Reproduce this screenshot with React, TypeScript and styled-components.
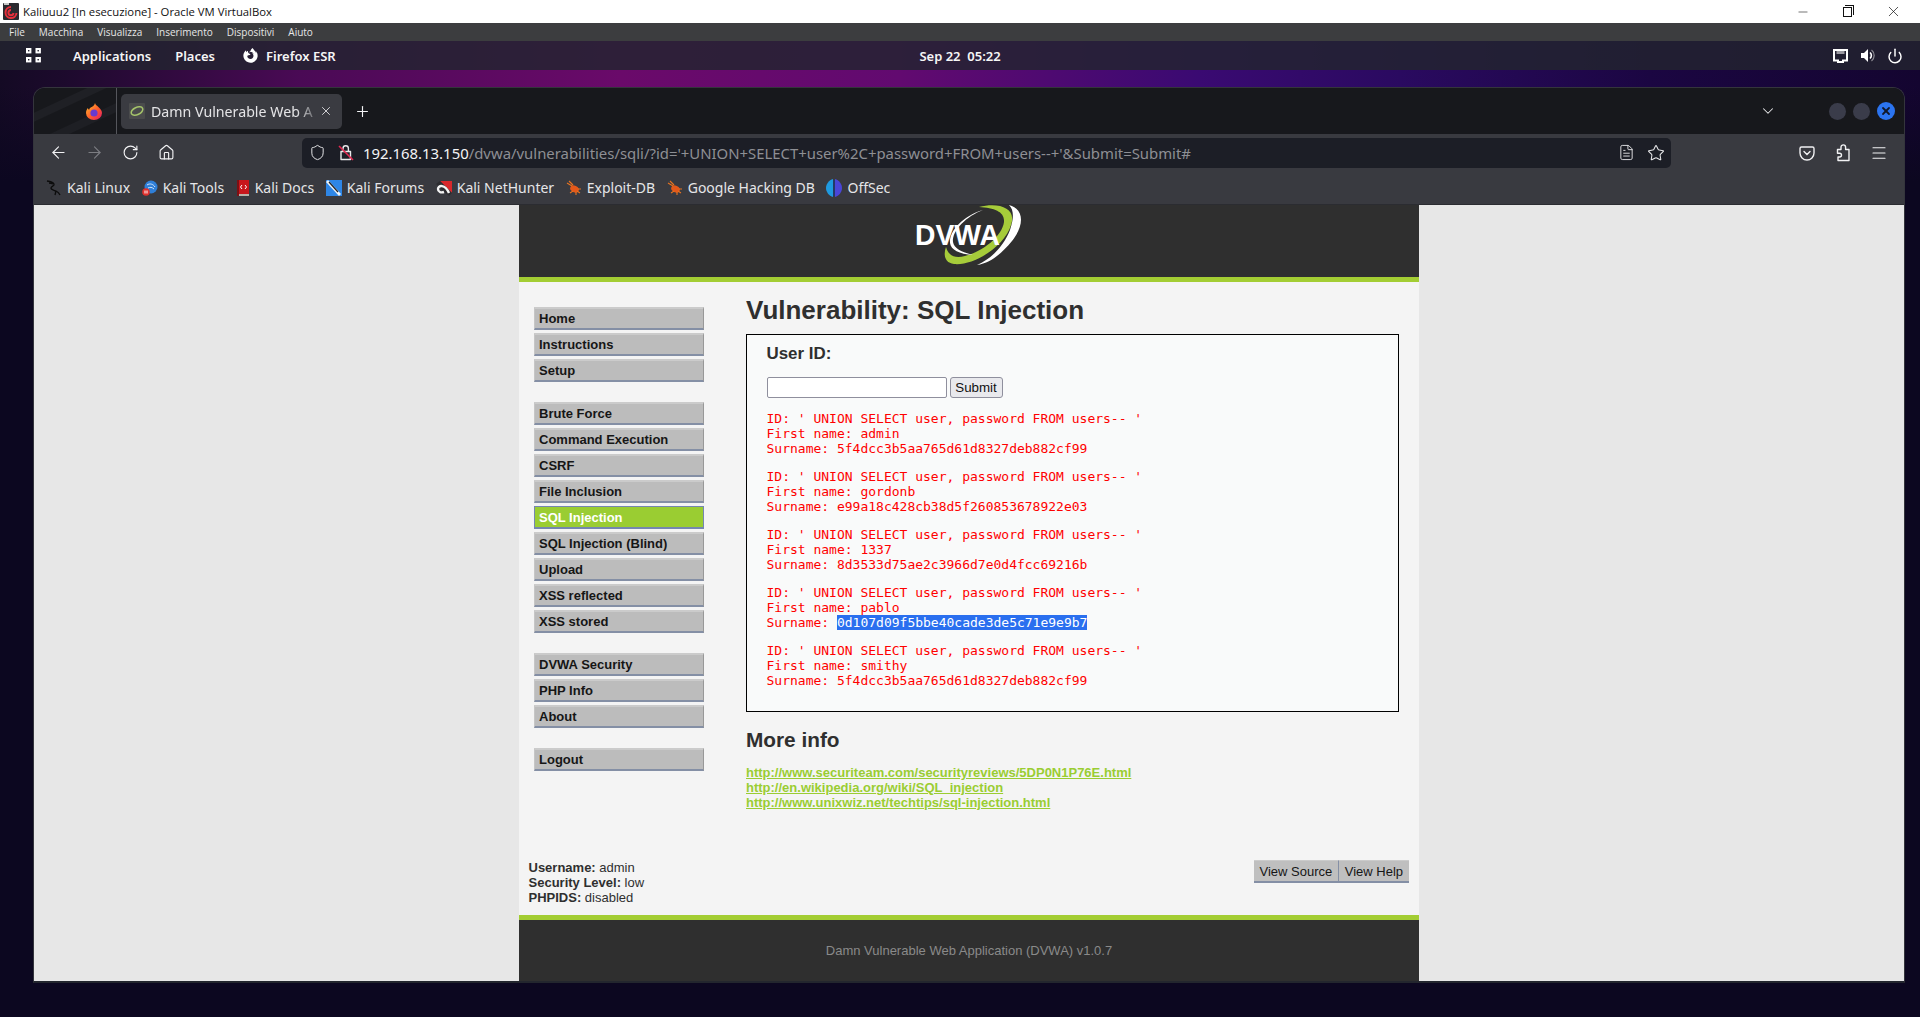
import React from 'react'
import styled, { createGlobalStyle } from 'styled-components'
import { ArrowLeft, ArrowRight, RotateCw, House, Shield, Star, X, Plus, ChevronDown, Menu as MenuIcon, Power, FileText, Minus } from 'lucide-react'
import { FaFirefoxBrowser } from 'react-icons/fa'

const GlobalStyle = createGlobalStyle`
  html, body { margin: 0; padding: 0; height: 100%; overflow: hidden; background: #0c0720; }
  #root { height: 100%; }
  * { box-sizing: border-box; }
`

const vmMenu = ['File', 'Macchina', 'Visualizza', 'Inserimento', 'Dispositivi', 'Aiuto']

const menuGroups = [
  ['Home', 'Instructions', 'Setup'],
  ['Brute Force', 'Command Execution', 'CSRF', 'File Inclusion', 'SQL Injection', 'SQL Injection (Blind)', 'Upload', 'XSS reflected', 'XSS stored'],
  ['DVWA Security', 'PHP Info', 'About'],
  ['Logout'],
]

const results = [
  { name: 'admin', hash: '5f4dcc3b5aa765d61d8327deb882cf99' },
  { name: 'gordonb', hash: 'e99a18c428cb38d5f260853678922e03' },
  { name: '1337', hash: '8d3533d75ae2c3966d7e0d4fcc69216b' },
  { name: 'pablo', hash: '0d107d09f5bbe40cade3de5c71e9e9b7', selected: true },
  { name: 'smithy', hash: '5f4dcc3b5aa765d61d8327deb882cf99' },
]

const links = [
  'http://www.securiteam.com/securityreviews/5DP0N1P76E.html',
  'http://en.wikipedia.org/wiki/SQL_injection',
  'http://www.unixwiz.net/techtips/sql-injection.html',
]

const VBoxIcon = () => (
  <svg width="16" height="17" viewBox="0 0 16 17">
    <rect width="16" height="17" rx="1" fill="#2b2b30" />
    <rect x="1" y="0" width="5" height="2" fill="#c9c9c9" />
    <path d="M8 4a5.5 5.5 0 1 0 5.5 6M8 7a2.6 2.6 0 1 0 2.6 3" fill="none" stroke="#e8303c" strokeWidth="2" />
  </svg>
)

const GridIcon = () => (
  <svg width="16" height="15" viewBox="0 0 16 15" fill="none" stroke="#fff" strokeWidth="2">
    <rect x="1" y="1" width="3.4" height="3.4" />
    <rect x="10.5" y="1" width="3.4" height="3.4" />
    <rect x="1" y="10" width="3.4" height="3.4" />
    <rect x="10.5" y="10" width="3.4" height="3.4" />
  </svg>
)

const NetworkIcon = () => (
  <svg width="15" height="15" viewBox="0 0 15 15">
    <path d="M1 2h13v10.5h-4V14H5v-1.5H1z" fill="none" stroke="#fff" strokeWidth="2" />
    <path d="M3.5 3h8v3h-8z" fill="#fff" opacity=".55" />
  </svg>
)

const SpeakerIcon = () => (
  <svg width="15" height="15" viewBox="0 0 15 15">
    <path d="M1 5h3l4-4v13l-4-4H1z" fill="#fff" />
    <path d="M10 4.5a4 4 0 0 1 0 6" fill="none" stroke="#fff" strokeWidth="1.6" />
    <path d="M11.5 2a7 7 0 0 1 0 11" fill="none" stroke="#8a8a92" strokeWidth="1.2" />
  </svg>
)

const FirefoxIcon = () => (
  <svg width="16" height="17" viewBox="0 0 16 17">
    <defs>
      <linearGradient id="ffx" x1="0" y1="0" x2="1" y2="1">
        <stop offset="0" stopColor="#ffc32c" />
        <stop offset=".55" stopColor="#ff5a2c" />
        <stop offset="1" stopColor="#e3186c" />
      </linearGradient>
    </defs>
    <path d="M9 0c.3 2 2 2.500 3.600 4.200C15 6.500 16 8 16 10a8 7 0 0 1-16 0c0-2.500 1-4 2-5 0 1 .5 1.600 1.200 1.800C3.500 4.500 6.500 4 7.500 2.800 8.300 2 8.800 1 9 0z" fill="url(#ffx)" />
    <circle cx="8" cy="10" r="3.600" fill="#6a3ad0" />
  </svg>
)

const DvwaFavicon = () => (
  <svg width="16" height="16" viewBox="0 0 16 16">
    <rect width="16" height="16" rx="1" fill="#4a4b4c" />
    <ellipse cx="8" cy="8" rx="6.200" ry="3.600" transform="rotate(-25 8 8)" fill="none" stroke="#a5c46a" strokeWidth="1.500" />
  </svg>
)

const LockOffIcon = () => (
  <svg width="16" height="17" viewBox="0 0 16 17" fill="none" strokeWidth="1.400">
    <path d="M3 7.500h9.500V15.500H3z" stroke="#e8e8ea" strokeLinejoin="round" />
    <path d="M5 7.500V4.500a2.700 2.700 0 0 1 5.400 0v3" stroke="#e8e8ea" />
    <path d="M1 2l14 14" stroke="#e22850" strokeWidth="1.600" />
  </svg>
)

const PocketIcon = () => (
  <svg width="16" height="16" viewBox="0 0 16 16" fill="none" stroke="#f0f0f2" strokeWidth="1.400">
    <path d="M2.500 2h11A1.500 1.500 0 0 1 15 3.500V8A7 7 0 0 1 1 8V3.500A1.500 1.500 0 0 1 2.500 2z" />
    <path d="M5 6.500l3 3 3-3" strokeLinecap="round" />
  </svg>
)

const ExtensionIcon = () => (
  <svg width="16" height="18" viewBox="0 0 16 18" fill="none" stroke="#f2f2f4" strokeWidth="1.400" strokeLinejoin="round">
    <path d="M2.500 5.500h3.500V3.200a2.300 2.300 0 0 1 4.600 0v2.300h3.400v11H3v-3.500h1.600a1.900 1.900 0 0 0 0-3.800H2.500z" />
  </svg>
)

const KaliIcon = () => (
  <svg width="16" height="16" viewBox="0 0 16 16" fill="none" stroke="#0c0c0c" strokeWidth="1.300">
    <path d="M1 1c3 .5 6 1 7 3 1 2-3 2-3 4s3 2 5 3 3 2 4 4" />
    <path d="M3 3c2 0 3 .5 4 1M10 11l-1 4" />
  </svg>
)

const KaliToolsIcon = () => (
  <svg width="16" height="16" viewBox="0 0 16 16">
    <circle cx="9" cy="7" r="6.500" fill="#2f7fd8" />
    <path d="M5 5c3-2 6-1 8 2M6 8c2-1 4-1 6 1" fill="none" stroke="#cfe4fa" strokeWidth="1" />
    <circle cx="4" cy="12" r="3.800" fill="#e0302c" />
    <path d="M3 10.500v3M5 10.500v3" stroke="#fff" strokeWidth="1" />
  </svg>
)

const KaliDocsIcon = () => (
  <svg width="14" height="16" viewBox="0 0 14 16">
    <rect x="1" y="0" width="12" height="14" fill="#c8161c" />
    <rect x="1" y="14" width="12" height="2" fill="#b8b0a8" />
    <rect x="1" y="0" width="2" height="16" fill="#7c1014" />
    <path d="M6 5L4.500 7 6 9M9 5l1.500 2L9 9" fill="none" stroke="#fff" strokeWidth="1" />
  </svg>
)

const KaliForumsIcon = () => (
  <svg width="16" height="16" viewBox="0 0 16 16">
    <rect width="16" height="16" fill="#2e86e6" />
    <path d="M2 0l13 14-2 2L0 2z" fill="#eef3f8" />
    <path d="M3 2l9 10" stroke="#222" strokeWidth="1.200" />
  </svg>
)

const NetHunterIcon = () => (
  <svg width="16" height="16" viewBox="0 0 16 16">
    <path d="M4 1h12v12z" fill="#d8282c" />
    <path d="M0 4l4-3 12 12-3 3z" fill="#2c2c30" />
    <path d="M13 13C9 4 2 5 2 9c0 3 3 4 6 3" fill="none" stroke="#f4f4f4" strokeWidth="2.400" />
  </svg>
)

const BugIcon = () => (
  <svg width="16" height="16" viewBox="0 0 16 16">
    <ellipse cx="8.500" cy="9" rx="4.500" ry="3.200" transform="rotate(25 8.500 9)" fill="#e4581a" />
    <path d="M1 3l5 3M3 1l4 4M4 13l3-2M10 15l0-3M15 9h-3M14 13l-3-2" stroke="#e8731f" strokeWidth="1.100" />
  </svg>
)

const OffSecIcon = () => (
  <svg width="16" height="18" viewBox="0 0 16 18">
    <path d="M7 0C3 1 0 5 0 9s3 8 7 9z" fill="#1f9ae0" />
    <path d="M9 0c4 1 7 5 7 9s-3 8-7 9z" fill="#4a46d8" />
    <path d="M8 1v16" stroke="#0c3a90" strokeWidth="1" />
  </svg>
)

const bookmarks = [
  { label: 'Kali Linux', icon: <KaliIcon /> },
  { label: 'Kali Tools', icon: <KaliToolsIcon /> },
  { label: 'Kali Docs', icon: <KaliDocsIcon /> },
  { label: 'Kali Forums', icon: <KaliForumsIcon /> },
  { label: 'Kali NetHunter', icon: <NetHunterIcon /> },
  { label: 'Exploit-DB', icon: <BugIcon /> },
  { label: 'Google Hacking DB', icon: <BugIcon /> },
  { label: 'OffSec', icon: <OffSecIcon /> },
]

const DvwaLogo = () => (
  <svg width="140" height="72" viewBox="0 5 140 72">
    <path d="M80 7C100 2 118 8 112 25 106 46 75 66 55 64 46 63 44 55 47 47 49 55 55 59 66 56 85 51 103 36 105 22 106 12 96 8 80 7Z" fill="#a6cc3a" />
    <path d="M110 5C127 10 124 27 113 41 103 53 92 63 78 65 94 58 105 45 111 30 115 18 115 10 110 5Z" fill="#fff" />
    <path d="M84 10C66 15 50 30 51 43 52 50 60 54 74 55 62 52 55 48 54 42 53 30 68 16 84 10Z" fill="#fff" />
    <text x="16" y="44.500" fontFamily="'Liberation Sans', Arial, sans-serif" fontWeight="700" fontSize="29" fill="#fff" textLength="85" lengthAdjust="spacingAndGlyphs">DVWA</text>
  </svg>
)

export default function App() {
  return (
    <Screen>
      <GlobalStyle />
      <TitleBar>
        <VBoxIcon />
        <TitleText>Kaliuuu2 [In esecuzione] - Oracle VM VirtualBox</TitleText>
        <WinControls>
          <Minus size={14} strokeWidth={1} />
          <RestoreGlyph />
          <X size={17} strokeWidth={1} />
        </WinControls>
      </TitleBar>
      <VmMenu>
        {vmMenu.map(item => <VmMenuItem key={item}>{item}</VmMenuItem>)}
      </VmMenu>
      <Wallpaper>
        <Panel>
          <PanelLeft>
            <GridIcon />
            <PanelLabel $gap={31}>Applications</PanelLabel>
            <PanelLabel $gap={24}>Places</PanelLabel>
            <PanelApp>
              <FaFirefoxBrowser size={15} color="#fff" />
              <span>Firefox ESR</span>
            </PanelApp>
          </PanelLeft>
          <PanelLabel>Sep 22&nbsp; 05:22</PanelLabel>
          <PanelRight>
            <NetworkIcon />
            <SpeakerIcon />
            <Power size={16} color="#fff" strokeWidth={2.2} />
          </PanelRight>
        </Panel>
        <Desktop>
          <BrowserWindow>
            <TabBar>
              <TabBarLogo><FirefoxIcon /></TabBarLogo>
              <Tab>
                <DvwaFavicon />
                <TabTitle>Damn Vulnerable Web Ap</TabTitle>
                <X size={14} color="#e6e6e8" strokeWidth={1.5} />
              </Tab>
              <NewTab><Plus size={17} color="#f4f4f6" strokeWidth={1.6} /></NewTab>
              <TabBarEnd>
                <ChevronDown size={18} color="#e8e8ea" strokeWidth={1.4} />
                <WindowDots>
                  <WindowDot />
                  <WindowDot />
                  <WindowDot $close><X size={12} color="#10182a" strokeWidth={3.6} /></WindowDot>
                </WindowDots>
              </TabBarEnd>
            </TabBar>
            <NavBar>
              <NavGroup>
                <NavButton><ArrowLeft size={19} color="#f2f2f4" strokeWidth={1.4} /></NavButton>
                <NavButton><ArrowRight size={19} color="#7c7d82" strokeWidth={1.4} /></NavButton>
                <NavButton><RotateCw size={17} color="#f2f2f4" strokeWidth={1.6} /></NavButton>
                <NavButton><House size={17} color="#f2f2f4" strokeWidth={1.6} /></NavButton>
              </NavGroup>
              <UrlBar>
                <Shield size={17} color="#e8e8ea" strokeWidth={1.4} />
                <LockOffIcon />
                <UrlText>
                  <UrlHost>192.168.13.150</UrlHost>/dvwa/vulnerabilities/sqli/?id='+UNION+SELECT+user%2C+password+FROM+users--+'&amp;Submit=Submit#
                </UrlText>
                <FileText size={17} color="#e8e8ea" strokeWidth={1.3} />
                <Star size={18} color="#e8e8ea" strokeWidth={1.4} />
              </UrlBar>
              <NavGroup $right>
                <NavButton><PocketIcon /></NavButton>
                <NavButton><ExtensionIcon /></NavButton>
                <NavButton><MenuIcon size={18} color="#f2f2f4" strokeWidth={1.5} /></NavButton>
              </NavGroup>
            </NavBar>
            <BookmarkBar>
              {bookmarks.map(b => (
                <Bookmark key={b.label}>
                  {b.icon}
                  <span>{b.label}</span>
                </Bookmark>
              ))}
            </BookmarkBar>
            <Viewport>
              <Container>
                <Header><DvwaLogo /></Header>
                <Body>
                  <Sidebar>
                    {menuGroups.map((group, i) => (
                      <MenuList key={i}>
                        {group.map(item => (
                          <MenuLink key={item} $active={item === 'SQL Injection'}>{item}</MenuLink>
                        ))}
                      </MenuList>
                    ))}
                  </Sidebar>
                  <Main>
                    <Heading>Vulnerability: SQL Injection</Heading>
                    <VulnBox>
                      <SubHeading>User ID:</SubHeading>
                      <FormRow>
                        <TextField readOnly />
                        <SubmitButton>Submit</SubmitButton>
                      </FormRow>
                      {results.map(r => (
                        <ResultBlock key={r.name}>
                          {"ID: ' UNION SELECT user, password FROM users-- '"}{'\n'}
                          First name: {r.name}{'\n'}
                          Surname: {r.selected ? <Selected>{r.hash}</Selected> : r.hash}
                        </ResultBlock>
                      ))}
                    </VulnBox>
                    <MoreInfo>More info</MoreInfo>
                    <LinkList>
                      {links.map(l => <InfoLink key={l} href="#">{l}</InfoLink>)}
                    </LinkList>
                  </Main>
                </Body>
                <InfoRow>
                  <UserInfo>
                    <div><b>Username:</b> admin</div>
                    <div><b>Security Level:</b> low</div>
                    <div><b>PHPIDS:</b> disabled</div>
                  </UserInfo>
                  <SourceButtons>
                    <SourceButton>View Source</SourceButton>
                    <SourceButton>View Help</SourceButton>
                  </SourceButtons>
                </InfoRow>
                <Footer>Damn Vulnerable Web Application (DVWA) v1.0.7</Footer>
              </Container>
            </Viewport>
          </BrowserWindow>
        </Desktop>
      </Wallpaper>
    </Screen>
  )
}

const uiFont = `'Noto Sans', 'Open Sans', sans-serif`
const webFont = `'Liberation Sans', Arial, sans-serif`

const Screen = styled.div`
  width: 1920px;
  height: 1017px;
  display: flex;
  flex-direction: column;
  overflow: hidden;
`

const TitleBar = styled.div`
  height: 23px;
  flex: none;
  background: #fff;
  display: flex;
  align-items: center;
  padding: 0 18px 0 3px;
  gap: 4px;
`

const TitleText = styled.span`
  font: 11.3px 'Open Sans', sans-serif;
  color: #111;
`

const WinControls = styled.div`
  margin-left: auto;
  display: flex;
  align-items: center;
  gap: 33px;
  color: #111;
`

const RestoreGlyph = styled.span`
  width: 9px;
  height: 10px;
  border: 1px solid #111;
  position: relative;
  &::after {
    content: '';
    position: absolute;
    top: -3px;
    right: -3px;
    width: 8px;
    height: 9px;
    border-top: 1px solid #111;
    border-right: 1px solid #111;
  }
`

const VmMenu = styled.div`
  height: 18px;
  flex: none;
  background: #3c3d3f;
  display: flex;
  align-items: center;
  padding-left: 9px;
  gap: 14px;
`

const VmMenuItem = styled.span`
  font: 10px 'Open Sans', sans-serif;
  color: #e6e6e6;
`

const Wallpaper = styled.div`
  flex: 1;
  display: flex;
  flex-direction: column;
  min-height: 0;
  background:
    linear-gradient(180deg, transparent 0, transparent 45px, #0c0720 140px),
    linear-gradient(90deg, #140a24 0, #1c0a2c 60px, #4a0a55 300px, #6a0a6a 620px, #620a70 900px, #3a0a72 1200px, #2a0a60 1400px, #1b0642 1650px, #140530 1920px);
`

const Panel = styled.div`
  height: 29px;
  flex: none;
  display: grid;
  grid-template-columns: 1fr auto 1fr;
  align-items: center;
  padding: 0 26px;
  background: rgba(34, 36, 48, 0.84);
`

const PanelLeft = styled.div`
  display: flex;
  align-items: center;
`

const PanelLabel = styled.span<{ $gap?: number }>`
  font: 600 13px ${uiFont};
  color: #f6f6f6;
  margin-left: ${({ $gap }) => $gap ?? 0}px;
`

const PanelApp = styled.div`
  display: flex;
  align-items: center;
  gap: 8px;
  margin-left: 28px;
  font: 600 13px ${uiFont};
  color: #f6f6f6;
`

const PanelRight = styled.div`
  display: flex;
  align-items: center;
  justify-content: flex-end;
  gap: 12px;
  margin-right: -9px;
`

const Desktop = styled.div`
  flex: 1;
  min-height: 0;
  padding: 17px 15px 34px 33px;
  display: flex;
`

const BrowserWindow = styled.div`
  flex: 1;
  display: flex;
  flex-direction: column;
  border: 1px solid #34353c;
  border-bottom: 2px solid #23262e;
  border-radius: 12px 12px 0 0;
  overflow: hidden;
`

const TabBar = styled.div`
  height: 46px;
  flex: none;
  background: #17181c;
  display: flex;
  align-items: center;
`

const TabBarLogo = styled.div`
  width: 83px;
  height: 100%;
  flex: none;
  display: flex;
  align-items: center;
  justify-content: flex-end;
  padding-right: 14px;
  border-right: 1px solid #55565c;
  background:
    linear-gradient(155deg, transparent 0 22px, #1f2025 23px 30px, transparent 31px 48px, #1e1f24 49px 56px, transparent 57px);
`

const Tab = styled.div`
  width: 221px;
  height: 35px;
  margin-left: 4px;
  flex: none;
  border-radius: 5px;
  background: #3a3b41;
  display: flex;
  align-items: center;
  padding: 0 9px 0 8px;
  gap: 6px;
`

const TabTitle = styled.span`
  flex: 1;
  min-width: 0;
  white-space: nowrap;
  font: 14.2px ${uiFont};
  color: #e4e4e6;
  -webkit-mask-image: linear-gradient(90deg, #000 90%, rgba(0, 0, 0, 0.35) 100%);
  mask-image: linear-gradient(90deg, #000 90%, rgba(0, 0, 0, 0.35) 100%);
`

const NewTab = styled.div`
  margin-left: 12px;
  display: flex;
`

const TabBarEnd = styled.div`
  margin-left: auto;
  display: flex;
  align-items: center;
  padding-right: 9px;
  gap: 52px;
`

const WindowDots = styled.div`
  display: flex;
  align-items: center;
  gap: 7px;
`

const WindowDot = styled.span<{ $close?: boolean }>`
  width: ${({ $close }) => ($close ? '18px' : '17px')};
  height: ${({ $close }) => ($close ? '18px' : '17px')};
  border-radius: 50%;
  background: ${({ $close }) => ($close ? '#2b74f0' : '#3a3c4a')};
  display: flex;
  align-items: center;
  justify-content: center;
`

const NavBar = styled.div`
  height: 37px;
  flex: none;
  background: #393a40;
  display: flex;
  align-items: center;
  padding: 0 7px 0 6px;
`

const NavGroup = styled.div<{ $right?: boolean }>`
  display: flex;
  align-items: center;
  margin-left: ${({ $right }) => ($right ? 'auto' : '0')};
`

const NavButton = styled.div`
  width: 36px;
  height: 30px;
  display: flex;
  align-items: center;
  justify-content: center;
`

const UrlBar = styled.div`
  width: 1369px;
  height: 30px;
  margin-left: 118px;
  border-radius: 5px;
  background: #1c1e26;
  display: flex;
  align-items: center;
  padding: 0 6px 0 7px;
  gap: 12px;
`

const UrlText = styled.div`
  flex: 1;
  margin-left: -3px;
  white-space: nowrap;
  font: 14.9px ${uiFont};
  color: #8e8f94;
`

const UrlHost = styled.span`
  color: #f4f4f6;
`

const BookmarkBar = styled.div`
  height: 34px;
  flex: none;
  background: #393a40;
  border-bottom: 1px solid #2b2c31;
  display: flex;
  align-items: center;
  padding-left: 12px;
  gap: 11.6px;
`

const Bookmark = styled.div`
  display: flex;
  align-items: center;
  gap: 5px;
  font: 14px ${uiFont};
  color: #e6e6e8;
  white-space: nowrap;
`

const Viewport = styled.div`
  flex: 1;
  min-height: 0;
  background: #e7e7e7;
  display: flex;
  justify-content: center;
  font: 13px/15px ${webFont};
`

const Container = styled.div`
  width: 900px;
  background: #f4f4f4;
  display: flex;
  flex-direction: column;
`

const Header = styled.div`
  height: 77px;
  flex: none;
  background: #2f2f2f;
  border-bottom: 5px solid #a3cd33;
  display: flex;
  justify-content: center;
`

const Body = styled.div`
  height: 578px;
  flex: none;
  display: flex;
`

const Sidebar = styled.nav`
  width: 227px;
  flex: none;
  padding: 25px 0 0 15px;
`

const MenuList = styled.div`
  width: 170px;
  display: flex;
  flex-direction: column;
  gap: 3px;
  margin-bottom: 20px;
`

const MenuLink = styled.a<{ $active?: boolean }>`
  height: 23px;
  display: flex;
  align-items: center;
  padding-left: 4px;
  font: bold 13px ${webFont};
  color: ${({ $active }) => ($active ? '#fff' : '#161616')};
  background: ${({ $active }) => ($active ? '#9acd32' : '#bcbcbc')};
  border-top: ${({ $active }) => ($active ? '1px solid #7587b0' : '2px solid #cbcbcb')};
  border-left: ${({ $active }) => ($active ? '1px solid #7587b0' : '1px solid #c6c6c6')};
  border-right: 1px solid ${({ $active }) => ($active ? '#7587b0' : '#989898')};
  border-bottom: 2px solid ${({ $active }) => ($active ? '#7587b0' : '#848fa5')};
`

const Main = styled.main`
  flex: 1;
  min-width: 0;
  padding: 13px 20px 0 0;
`

const Heading = styled.h1`
  margin: 0 0 9px;
  font: bold 26px/30px ${webFont};
  color: #2f2f2f;
`

const VulnBox = styled.div`
  height: 378px;
  border: 1px solid #000;
  background: #f9fafa;
  padding: 9px 0 0 19.5px;
`

const SubHeading = styled.h3`
  margin: 0 0 13px;
  font: bold 16.9px/20px ${webFont};
  color: #2f2f2f;
`

const FormRow = styled.div`
  display: flex;
  align-items: stretch;
  gap: 3px;
  height: 21px;
  margin-bottom: 13px;
`

const TextField = styled.input`
  width: 180px;
  height: 21px;
  padding: 0 3px;
  background: #fff;
  border: 1px solid #8f8f9d;
  border-radius: 2px;
`

const SubmitButton = styled.button`
  width: 53px;
  height: 21px;
  padding: 0;
  background: #e9e9ed;
  border: 1px solid #8f8f9d;
  border-radius: 3px;
  font: 13.33px ${webFont};
  color: #111;
`

const ResultBlock = styled.pre`
  margin: 0 0 13px;
  font: 13px/15px 'DejaVu Sans Mono', monospace;
  color: #ff0000;
`

const Selected = styled.span`
  background: #2a6fef;
  color: #fff;
`

const MoreInfo = styled.h2`
  margin: 16px 0 13px;
  font: bold 20.8px/24px ${webFont};
  color: #2f2f2f;
`

const LinkList = styled.div`
  display: flex;
  flex-direction: column;
  align-items: flex-start;
`

const InfoLink = styled.a`
  font: bold 13px/15px ${webFont};
  color: #9acd32;
  text-decoration: underline;
`

const InfoRow = styled.div`
  height: 55px;
  flex: none;
  display: flex;
  justify-content: space-between;
  align-items: flex-start;
  padding: 0 10px 0 9.5px;
`

const UserInfo = styled.div`
  font: 13px/15px ${webFont};
  color: #2f2f2f;
`

const SourceButtons = styled.div`
  display: flex;
`

const SourceButton = styled.div`
  height: 23px;
  display: flex;
  align-items: center;
  padding: 0 6px 0 5.5px;
  font: 13px ${webFont};
  color: #161616;
  background: #bfbfbf;
  border-top: 1px solid #cbcbcb;
  border-right: 1px solid #848fa5;
  border-bottom: 2px solid #848fa5;
  &:last-child { border-right: 0; }
`

const Footer = styled.div`
  flex: 1;
  background: #2f2f2f;
  border-top: 5px solid #a3cd33;
  display: flex;
  align-items: center;
  justify-content: center;
  font: 13px ${webFont};
  color: #8a8a8a;
`
